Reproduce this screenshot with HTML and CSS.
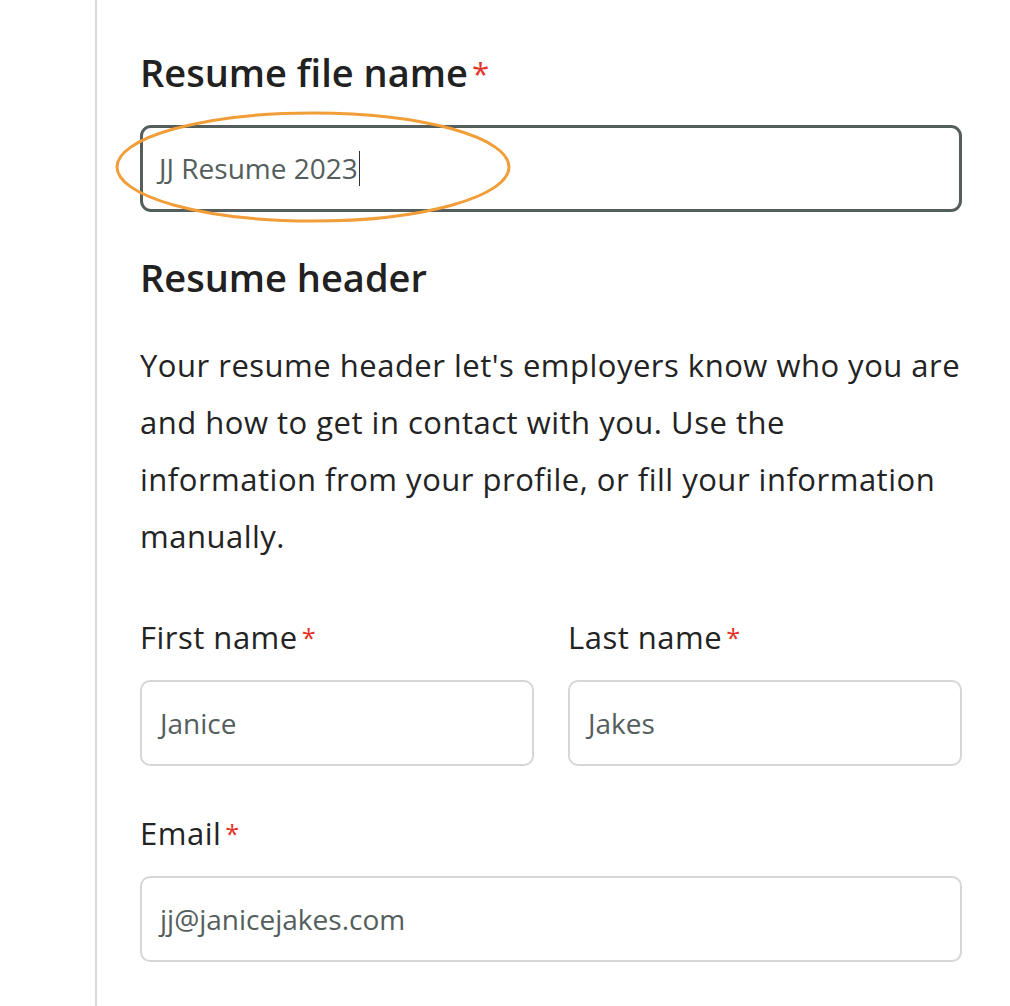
FILE: index.html
```html
<!DOCTYPE html>
<html lang="en">
<head>
<meta charset="utf-8">
<title>Resume</title>
<link rel="stylesheet" href="styles.css">
</head>
<body>
<div class="page">
  <aside class="rail"></aside>
  <main class="form">
    <h1 class="title">Resume file name<span class="req">*</span></h1>
    <div class="file-wrap">
      <div class="field field-active"><span class="value">JJ Resume 2023</span><span class="caret"></span></div>
      <svg class="circle" width="404" height="120" viewBox="0 0 404 120" aria-hidden="true">
        <ellipse cx="200" cy="58" rx="196" ry="54" fill="none" stroke="#f19d38" stroke-width="3"/>
      </svg>
    </div>
    <h2 class="title section">Resume header</h2>
    <p class="intro">Your resume header let's employers know who you are and how to get in contact with you. Use the information from your profile, or fill your information manually.</p>
    <div class="row">
      <div class="group">
        <label class="label">First name<span class="req">*</span></label>
        <div class="field"><span class="value">Janice</span></div>
      </div>
      <div class="group">
        <label class="label">Last name<span class="req">*</span></label>
        <div class="field"><span class="value">Jakes</span></div>
      </div>
    </div>
    <div class="group email">
      <label class="label">Email<span class="req">*</span></label>
      <div class="field"><span class="value">jj@janicejakes.com</span></div>
    </div>
  </main>
</div>
</body>
</html>
```

FILE: styles.css
```css
html, body {
  margin: 0;
  padding: 0;
  background: #ffffff;
}
body {
  font-family: "Open Sans", "Noto Sans", sans-serif;
  color: #222222;
  width: 1010px;
  height: 1006px;
  overflow: hidden;
}
.page {
  display: flex;
  height: 1006px;
}
.rail {
  width: 95px;
  flex: none;
  border-right: 2px solid #d9d9d9;
}
.form {
  width: 822px;
  padding: 46px 0 0 43px;
  display: flex;
  flex-direction: column;
}
.title {
  margin: 0;
  font-size: 38px;
  line-height: 52px;
  font-weight: 600;
  color: #212121;
}
.req {
  color: #e3332b;
  margin-left: 4px;
  font-weight: 400;
  font-size: 0.82em;
  vertical-align: 0.08em;
}
.file-wrap {
  position: relative;
  margin-top: 26px;
}
.field {
  box-sizing: border-box;
  height: 86px;
  border: 2px solid #d6d6d6;
  border-radius: 10px;
  display: flex;
  align-items: center;
  padding: 0 0 0 18px;
  font-size: 28px;
  color: #545e5d;
  background: #fff;
}
.field-active {
  height: 87px;
  border: 3px solid #535e5d;
  border-radius: 11px;
  padding-left: 16px;
}
.caret {
  display: inline-block;
  width: 0;
  height: 35px;
  border-left: 1.5px solid #333;
  margin-left: 1px;
}
.circle {
  position: absolute;
  left: -27px;
  top: -16px;
}
.section {
  margin-top: 39px;
}
.intro {
  margin: 34px 0 0;
  font-size: 31px;
  letter-spacing: 0.5px;
  line-height: 57px;
  color: #232323;
}
.row {
  display: flex;
  gap: 34px;
  margin-top: 52px;
}
.group {
  flex: 1;
  display: flex;
  flex-direction: column;
  gap: 22px;
}
.label {
  font-size: 31px;
  letter-spacing: 0.5px;
  line-height: 41px;
  color: #232323;
}
.label .req {
  margin-left: 4px;
}
.email {
  margin-top: 47px;
}
```
